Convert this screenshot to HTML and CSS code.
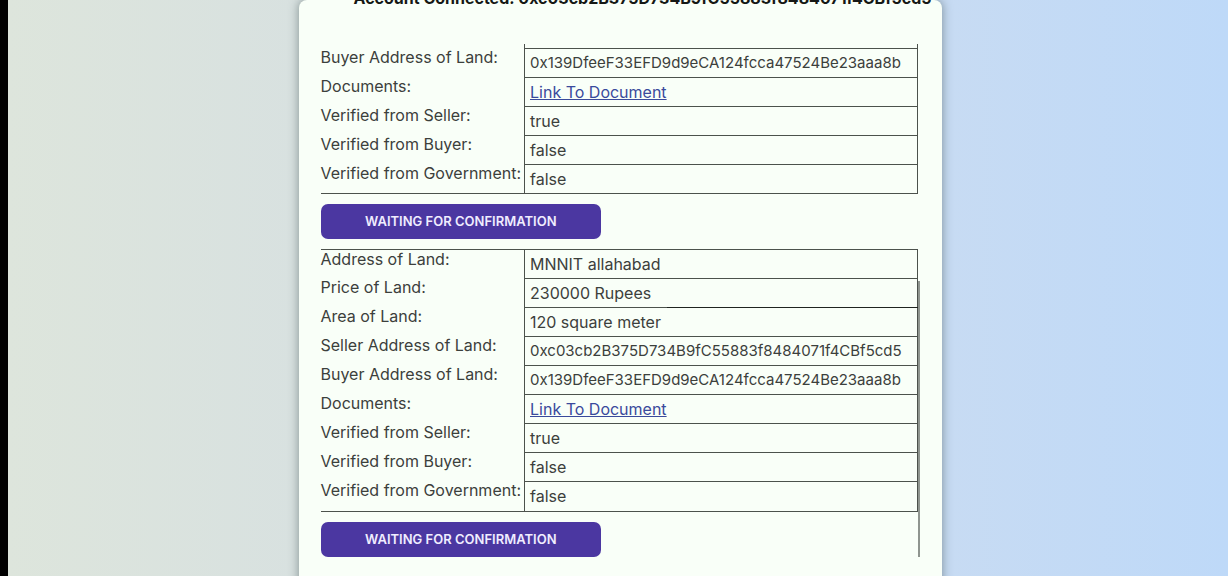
FILE: index.html
```html
<!DOCTYPE html>
<html lang="en">
<head>
<meta charset="utf-8">
<title>Land Records</title>
<link rel="stylesheet" href="styles.css">
</head>
<body>
<main class="page">
  <section class="card">
    <h1 class="account">Account Connected: 0xc03cb2B375D734B9fC55883f8484071f4CBf5cd5</h1>
    <table class="record record-continued">
      <tbody>
        <tr class="stub"><th></th><td></td></tr>
        <tr><th scope="row">Buyer Address of Land:</th><td class="hash">0x139DfeeF33EFD9d9eCA124fcca47524Be23aaa8b</td></tr>
        <tr><th scope="row">Documents:</th><td><a href="#document-1">Link To Document</a></td></tr>
        <tr><th scope="row">Verified from Seller:</th><td>true</td></tr>
        <tr><th scope="row">Verified from Buyer:</th><td>false</td></tr>
        <tr><th scope="row">Verified from Government:</th><td>false</td></tr>
      </tbody>
    </table>
    <button class="action" type="button">WAITING FOR CONFIRMATION</button>
    <div class="entry">
      <table class="record record-full">
        <tbody>
          <tr><th scope="row">Address of Land:</th><td>MNNIT allahabad</td></tr>
          <tr><th scope="row">Price of Land:</th><td>230000 Rupees</td></tr>
          <tr><th scope="row">Area of Land:</th><td>120 square meter</td></tr>
          <tr><th scope="row">Seller Address of Land:</th><td class="hash">0xc03cb2B375D734B9fC55883f8484071f4CBf5cd5</td></tr>
          <tr><th scope="row">Buyer Address of Land:</th><td class="hash">0x139DfeeF33EFD9d9eCA124fcca47524Be23aaa8b</td></tr>
          <tr><th scope="row">Documents:</th><td><a href="#document-2">Link To Document</a></td></tr>
          <tr><th scope="row">Verified from Seller:</th><td>true</td></tr>
          <tr><th scope="row">Verified from Buyer:</th><td>false</td></tr>
          <tr><th scope="row">Verified from Government:</th><td>false</td></tr>
        </tbody>
      </table>
      <button class="action" type="button">WAITING FOR CONFIRMATION</button>
    </div>
  </section>
</main>
</body>
</html>
```

FILE: styles.css
```css
* { box-sizing: border-box; }

body {
  margin: 0;
  overflow: hidden;
  font-family: Inter, "Open Sans", sans-serif;
  color: #3c403c;
}

.page {
  min-height: 100vh;
  display: flex;
  justify-content: center;
  border-left: 8px solid #000;
  padding-left: 4px;
  background: linear-gradient(90deg, #dde5dc 0%, #d8e1e0 24%, #c7dbf3 77%, #bed9f8 100%);
}

.card {
  flex: 0 1 643px;
  padding: 0 24px 20px 22px;
  border-radius: 8px 8px 0 0;
  background: #f9fff8;
  box-shadow: 0 0 10px 1px rgba(70, 90, 90, 0.5);
}

.account {
  margin: -12px -14px 36px 0;
  font-size: 16px;
  line-height: 20px;
  font-weight: 700;
  text-align: right;
  white-space: nowrap;
  color: #151815;
}

.record {
  width: 100%;
  table-layout: fixed;
  border-collapse: collapse;
  border-bottom: 1px solid #4c524c;
  font-size: 16px;
  line-height: 18px;
}

.record th {
  width: 204px;
  padding: 0;
  font-weight: 400;
  text-align: left;
  vertical-align: top;
  white-space: nowrap;
}

.record td {
  padding: 5px;
  border: 1px solid #4c524c;
  white-space: nowrap;
}

.record .hash { font-size: 15px; }

.record .stub td {
  height: 4px;
  padding: 0;
  border-top: 0;
}

.record-full { border-top: 1px solid #4c524c; }

.record-full tr:last-child td { padding-bottom: 6px; }

.record a { color: #3a4a9c; }

.action {
  display: block;
  width: 47%;
  height: 35px;
  margin: 10px 0;
  padding: 0;
  border: 0;
  border-radius: 7px;
  background: #4b37a1;
  color: #f0edff;
  font: 600 13px/16px Inter, "Open Sans", sans-serif;
}

.entry { position: relative; }

.entry::before,
.entry::after {
  content: "";
  position: absolute;
  background: #8f958f;
}

.entry::before {
  top: 32px;
  right: -2px;
  bottom: 0;
  width: 2px;
}

.entry::after {
  top: 58px;
  right: 0;
  width: 42%;
  height: 1px;
  background: #202420;
}
```
